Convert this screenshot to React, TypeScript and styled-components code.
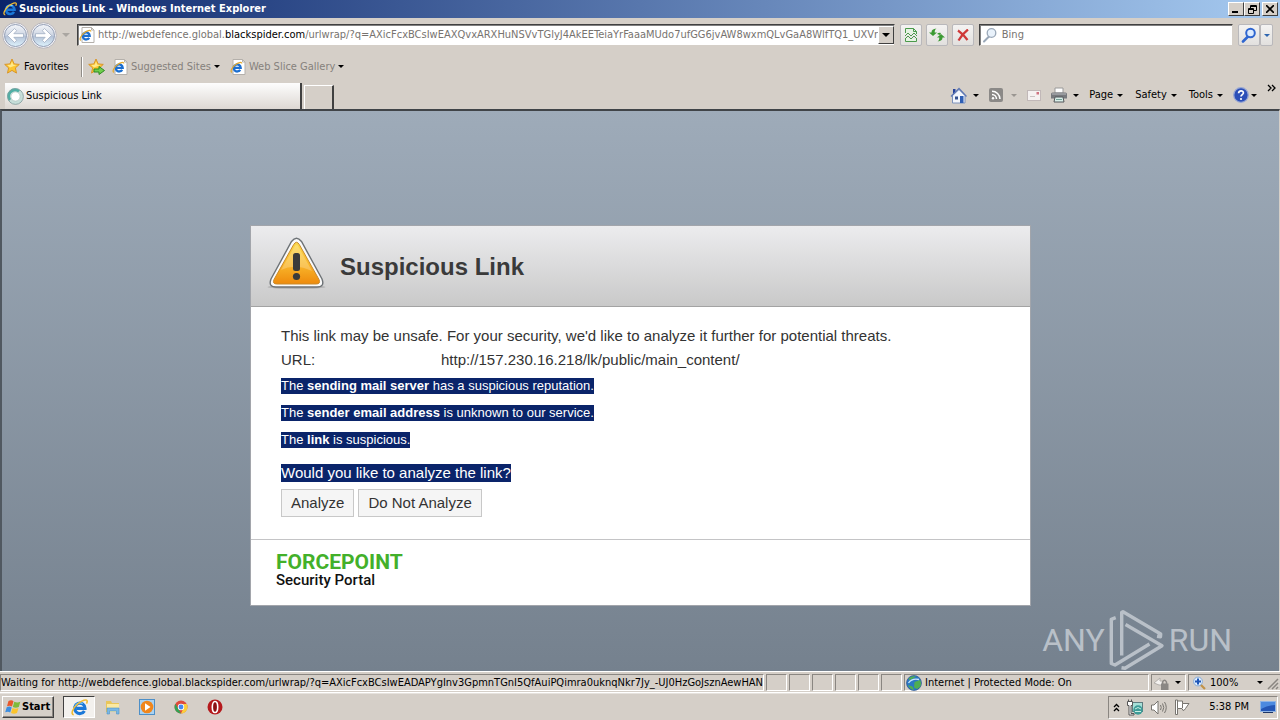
import React from "react";
import styled, { createGlobalStyle } from "styled-components";

const GlobalStyle = createGlobalStyle`
  *, *::before, *::after { box-sizing: border-box; }
  body { margin: 0; background: #d5cfc8; }
  button, input { font: inherit; color: inherit; }
  button { padding: 0; margin: 0; border: 0; background: none; }
  svg { display: block; flex: none; }
`;

const face = "#d5cfc8";
const uiFont = `Tahoma, "DejaVu Sans Condensed", "DejaVu Sans", sans-serif`;

/* ---------- window frame ---------- */

const Window = styled.div`
  display: flex;
  flex-direction: column;
  min-height: 100vh;
  background: ${face};
  color: #000;
  font-family: ${uiFont};
  font-size: 11px;
  line-height: 14px;
  white-space: nowrap;
`;

const TitleBar = styled.header`
  display: flex;
  align-items: center;
  gap: 2px;
  height: 18px;
  padding: 0 2px 0 3px;
  background: linear-gradient(90deg, #0a246a, #a6caf0);
  color: #fff;
`;

const WindowTitle = styled.h1`
  flex: 1;
  margin: 0;
  font-size: 11px;
  font-weight: bold;
`;

const CaptionButtons = styled.div`
  display: flex;
`;

const CaptionButton = styled.button<{ $apart?: boolean }>`
  display: grid;
  place-items: center;
  width: 16px;
  height: 14px;
  margin-left: ${(p) => (p.$apart ? "2px" : "0")};
  background: ${face};
  border: 1px solid;
  border-color: #fff #404040 #404040 #fff;
`;

/* ---------- navigation row ---------- */

const NavRow = styled.div`
  display: flex;
  align-items: center;
  gap: 5px;
  height: 34px;
  padding: 0 7px 0 2px;
`;

const TravelButtons = styled.div`
  display: flex;
  align-items: center;
  gap: 1px;
  width: 70px;
`;

const PlainButton = styled.button<{ $muted?: boolean; $gap?: number }>`
  display: flex;
  align-items: center;
  gap: ${(p) => p.$gap ?? 4}px;
  color: ${(p) => (p.$muted ? "#85817c" : "#000")};
`;

const Field = styled.div`
  display: flex;
  align-items: center;
  height: 22px;
  background: #fff;
  border: 1px solid;
  border-color: #404040 #d5cfc8 #d5cfc8 #404040;
  box-shadow: inset 1px 1px 0 #808080;
  color: #77736f;
`;

const AddressField = styled(Field)`
  flex: 1;
  min-width: 0;
  gap: 3px;
  padding-left: 1px;
`;

const AddressText = styled.div`
  flex: 1;
  min-width: 0;
  overflow: hidden;
  outline: 0;
`;

const Domain = styled.span`
  color: #000;
`;

const ComboButton = styled.button`
  display: grid;
  place-items: center;
  width: 16px;
  height: 18px;
  margin-left: -3px;
  background: ${face};
  border: 1px solid;
  border-color: #fff #404040 #404040 #fff;
`;

const ToolButton = styled.button<{ $narrow?: boolean }>`
  display: grid;
  place-items: center;
  width: ${(p) => (p.$narrow ? 13 : 22)}px;
  height: 22px;
  background: linear-gradient(#f4f3f2, #e2e0de);
  border: 1px solid #b9b8bb;
  border-radius: 2px;
`;

const ButtonGroup = styled.div<{ $gap?: number }>`
  display: flex;
  gap: ${(p) => p.$gap ?? 0}px;
`;

const SearchField = styled(Field)`
  width: 20%;
  gap: 4px;
  padding-left: 2px;
`;

const SearchInput = styled.input`
  flex: 1;
  min-width: 0;
  padding: 0;
  border: 0;
  outline: 0;
  background: transparent;
  &::placeholder { color: #77736f; opacity: 1; }
`;

/* ---------- favorites and tabs ---------- */

const FavoritesRow = styled.nav`
  display: flex;
  align-items: center;
  height: 29px;
  padding-left: 4px;
  gap: 5px;
`;

const FavoritesButton = styled(PlainButton)`
  width: 72px;
`;

const Divider = styled.span`
  width: 2px;
  height: 20px;
  border-left: 1px solid #908c87;
  border-right: 1px solid #fff;
`;

const LinkButton = styled(PlainButton)`
  margin: 0 3px 0 2px;
`;

const TabRow = styled.div`
  display: flex;
  align-items: flex-end;
  height: 28px;
  padding-left: 5px;
  gap: 2px;
`;

const Tab = styled.button`
  display: flex;
  align-items: center;
  gap: 2px;
  width: 297px;
  height: 26px;
  padding-left: 2px;
  background: linear-gradient(#fdfdfd, #ddd8d3);
  border-right: 2px solid #404040;
`;

const NewTab = styled.button`
  width: 30px;
  height: 24px;
  border: solid;
  border-width: 1px 2px 0 1px;
  border-color: #fff #404040 #fff #fff;
`;

const CommandBar = styled.div`
  display: flex;
  align-items: center;
  justify-content: flex-end;
  flex: 1;
  height: 28px;
  padding-right: 4px;
  gap: 10px;
`;

const Chevrons = styled.button`
  align-self: flex-start;
  line-height: 14px;
`;

/* ---------- page ---------- */

const Viewport = styled.main`
  flex: 1;
  display: flex;
  flex-direction: column;
  align-items: center;
  position: relative;
  padding: 114px 16px 60px;
  border-top: 2px solid #404448;
  border-left: 2px solid #505860;
  border-right: 1px solid ${face};
  background: linear-gradient(#9eabb9, #75818e);
  font-family: Arial, "Liberation Sans", sans-serif;
  font-size: 15px;
  line-height: 24px;
  color: #333;
  white-space: normal;
`;

const Card = styled.section`
  width: 100%;
  max-width: 781px;
  background: #fff;
  border: 1px solid #a2a5ab;
`;

const CardHeader = styled.header`
  display: flex;
  align-items: center;
  gap: 14px;
  height: 81px;
  padding: 0 0 4px 16px;
  background: linear-gradient(#ececee, #c9c9c9);
  border-bottom: 1px solid #a3a3a3;
`;

const Heading = styled.h2`
  margin: 0;
  padding-top: 6px;
  font-size: 24px;
  line-height: 30px;
  color: #3a3a3a;
`;

const CardBody = styled.div`
  padding: 17px 30px 22px;
`;

const Line = styled.p`
  margin: 0;
`;

const Facts = styled.dl`
  display: grid;
  grid-template-columns: 160px 1fr;
  margin: 0;
  dd { margin: 0; }
`;

const Reasons = styled.ul`
  margin: 0 0 8px;
  padding: 0;
  list-style: none;
  font-size: 13px;
  line-height: 27px;
`;

const Selected = styled.span`
  padding-bottom: 1px;
  background: #0a246a;
  color: #fff;
`;

const Actions = styled.div`
  display: flex;
  gap: 4px;
  margin-top: 4px;
`;

const ActionButton = styled.button`
  height: 28px;
  padding: 0 9px;
  background: #f5f5f5;
  border: 1px solid #c8c8c8;
`;

const CardFooter = styled.footer`
  height: 66px;
  padding: 11px 25px;
  border-top: 1px solid #c4c4c6;
  font-family: Roboto, sans-serif;
`;

const Brand = styled.div`
  font-size: 21px;
  line-height: 22px;
  font-weight: 700;
  color: #43b02a;
`;

const Product = styled.div`
  font-size: 15px;
  line-height: 15px;
  font-weight: 500;
  color: #111;
`;

const Watermark = styled.div`
  position: absolute;
  right: 47px;
  bottom: 0;
  display: flex;
  align-items: center;
  gap: 4px;
  font-family: Roboto, sans-serif;
  font-size: 32px;
  line-height: 60px;
  color: #b9c0c8;
`;

/* ---------- status bar and taskbar ---------- */

const StatusBar = styled.footer`
  display: flex;
  gap: 2px;
  height: 22px;
  padding: 2px 0 1px;
  border-top: 1px solid #fff;
  border-bottom: 1px solid #fff;
`;

const StatusCell = styled.div<{ $width?: number }>`
  display: flex;
  align-items: center;
  gap: 4px;
  flex: none;
  width: ${(p) => (p.$width ? `${p.$width}px` : "auto")};
  padding: 0 1px;
  border: 1px solid;
  border-color: #8a8681 #fff #fff #8a8681;
`;

const MessageCell = styled(StatusCell)`
  flex: 1 0 auto;
  padding: 0;
`;

const ZoneCell = styled(StatusCell)`
  flex: 0 1 250px;
  gap: 3px;
`;

const ZoomCell = styled(StatusCell)`
  padding-left: 4px;
  border-right: 0;
`;

const ZoomValue = styled.span`
  flex: 1;
`;

const TaskBar = styled.div`
  display: flex;
  align-items: center;
  height: 27px;
  padding: 0 2px;
  border-top: 1px solid #e6e2dd;
`;

const StartButton = styled.button`
  display: flex;
  align-items: center;
  gap: 1px;
  width: 52px;
  height: 22px;
  padding-left: 2px;
  margin-right: 9px;
  font-weight: bold;
  border: 1px solid;
  border-color: #fff #404040 #404040 #fff;
  box-shadow: inset -1px -1px 0 #8a8681;
`;

const TaskButton = styled.button<{ $active?: boolean }>`
  display: grid;
  place-items: center;
  width: 32px;
  height: 22px;
  margin-right: 2px;
  background: ${(p) => (p.$active ? "#f3f1ee" : "transparent")};
  border: ${(p) => (p.$active ? "1px solid" : "0")};
  border-color: #404040 #fff #fff #404040;
`;

const Tray = styled.div`
  display: flex;
  align-items: center;
  gap: 7px;
  height: 23px;
  margin-left: auto;
  padding: 0 1px 0 4px;
  border: 1px solid;
  border-color: #8a8681 #fff #fff #8a8681;
`;

const Clock = styled.time`
  margin: 0 4px 0 11px;
`;

/* ---------- icons ---------- */

const Caret = ({ color = "#000", size = 6 }: { color?: string; size?: number }) => (
  <svg width={size} height={size / 2} viewBox="0 0 6 3" fill={color} aria-hidden="true">
    <path d="M0 0h6L3 3z" />
  </svg>
);

const IeGlyph = ({ size = 16 }: { size?: number }) => (
  <svg width={size} height={size} viewBox="0 0 16 16" fill="none" aria-hidden="true">
    <path d="M12.600 11.200A4.900 4.900 0 1 1 13.200 8.800H5" stroke="#1b78d8" strokeWidth="2.900" />
    <path d="M3.600 7.500A5 5 0 0 1 11 4.300" stroke="#7fd0fb" strokeWidth="1.200" />
    <path d="M2.600 14.800C-.6 14.400 1.600 8.600 6.300 4.700 10.400 1.300 14.700-.1 15.200 1.800c.1.800-.1 1.600-.6 2.500" stroke="#f0bb33" strokeWidth="1.500" />
  </svg>
);

const IePage = () => (
  <svg width="16" height="16" viewBox="0 0 16 16" fill="none" aria-hidden="true">
    <path d="M3 .5h9.500l2.500 2.500v12.500H3z" fill="#fff" stroke="#b4b0ab" />
    <path d="M12.500.5v2.500H15" stroke="#b4b0ab" />
    <path d="M10.200 10.800A3.500 3.500 0 1 1 10.700 8.800H4.500" stroke="#1c6fd0" strokeWidth="2.300" />
    <path d="M1.900 13.300C-.2 12.800 2 8.300 5.300 5.800c2.900-2.300 6.300-3.200 6.500-1.300" stroke="#e3a92e" strokeWidth="1.200" />
  </svg>
);

const Travel = ({ flip }: { flip?: boolean }) => (
  <svg width="27" height="27" viewBox="0 0 27 27" fill="none" aria-hidden="true">
    <defs>
      <linearGradient id={flip ? "orbF" : "orbB"} x1="0" y1="0" x2="0" y2="1">
        <stop offset="0" stopColor="#f4f6fa" />
        <stop offset=".48" stopColor="#ced6e3" />
        <stop offset=".52" stopColor="#b4c1d6" />
        <stop offset="1" stopColor="#def3fd" />
      </linearGradient>
    </defs>
    <circle cx="13.500" cy="13.500" r="12.800" fill="#f6f6f8" stroke="#b6b4bb" />
    <circle cx="13.500" cy="13.500" r="11" fill={`url(#${flip ? "orbF" : "orbB"})`} stroke="#929db4" />
    <g transform={flip ? "rotate(180 13.500 13.500)" : undefined}>
      <path d="M5.500 13.500l7-7 2.200 2.200-2.900 3H21.500v3.600h-9.700l2.900 3-2.200 2.200z" fill="#fff" stroke="#9aa7bd" strokeWidth=".7" />
    </g>
  </svg>
);

const Star = ({ arrow }: { arrow?: boolean }) => (
  <svg width="17" height="17" viewBox="0 0 17 17" aria-hidden="true">
    <path d="M8 1l2.100 4.900 5.200.5-3.900 3.500 1.100 5.200L8 12.400l-4.500 2.700 1.100-5.200L.7 6.400l5.200-.5z" fill="#fdc630" stroke="#d9962a" strokeLinejoin="round" />
    <path d="M8 3.500l1.300 3.200 3.400.4L6 9.500 3.300 7.100l3.400-.4z" fill="#ffe98a" />
    {arrow && <path d="M6 11h5V8.500l5.500 4-5.500 4V14H6z" fill="#6fce4c" stroke="#2e8a22" />}
  </svg>
);

const Spinner = () => (
  <svg width="17" height="17" viewBox="0 0 17 17" fill="none" aria-hidden="true">
    <circle cx="8.500" cy="8.500" r="6.300" stroke="#c6ded9" strokeWidth="3" />
    <path d="M3 12A6.300 6.300 0 0 1 12 3.300" stroke="#4fb0a6" strokeWidth="3" />
    <circle cx="8.500" cy="8.500" r="7.900" stroke="#7f9a9a" strokeWidth=".8" />
    <circle cx="8.500" cy="8.500" r="4.600" fill="#fff" stroke="#9dbab6" strokeWidth=".6" />
  </svg>
);

const Magnifier = ({ color, pale }: { color: string; pale?: boolean }) => (
  <svg width="16" height="16" viewBox="0 0 16 16" fill="none" aria-hidden="true">
    <path d="M7 9.500L2 14.500" stroke={color} strokeWidth={pale ? 2 : 2.600} strokeLinecap="round" />
    <circle cx="9.500" cy="6" r="4.300" fill={pale ? "#e9f2fb" : "#dcebff"} stroke={color} strokeWidth={pale ? 1.300 : 2} />
  </svg>
);

const CompatPage = () => (
  <svg width="14" height="16" viewBox="0 0 14 16" fill="none" stroke="#4b9a4b" aria-hidden="true">
    <path d="M1.500 6V1.500h8l3 3V7M1.500 11v3.500h11V12" fill="#e6f3e3" />
    <path d="M9.500 1.500v3h3" />
    <path d="M1 9l3-3 3 3 3-3 3 3M1 12l3-3 3 3 3-3 3 3" />
  </svg>
);

const Refresh = () => (
  <svg width="16" height="14" viewBox="0 0 16 14" aria-hidden="true" fill="#3c9a33">
    <path d="M4 8L0 4.500h2.500C2.500 2 4 .8 7.500.5 6 1.500 5.700 2.500 5.700 4.500H8z" />
    <path d="M12 6l4 3.500h-2.500c0 2.500-1.500 3.700-5 4 1.500-1 1.800-2 1.800-4H8z" />
    <path d="M8 6q2-2 4-1l-1 2z" />
  </svg>
);

const Stop = () => (
  <svg width="12" height="12" viewBox="0 0 12 12" fill="none" stroke="#cf3838" strokeWidth="2.200" aria-hidden="true">
    <path d="M1 1.500q5 3.500 9.500 9.500M11 .5Q5 5 1.500 11.500" />
  </svg>
);

const Home = () => (
  <svg width="17" height="17" viewBox="0 0 17 17" aria-hidden="true">
    <path d="M3 2h2.500v5H3z" fill="#27439b" />
    <path d="M2.500 8.500L9 2.500l6 6v7.500h-12.500z" fill="#f3f6fc" stroke="#7d93bd" />
    <path d="M1 9.500L9 1.500l7.500 8" fill="none" stroke="#5f78b4" strokeWidth="1.300" />
    <path d="M10 9h3.500v7H10z" fill="#2f5fb5" />
    <path d="M5 9.500h3v3H5z" fill="#33518f" />
  </svg>
);

const Feed = () => (
  <svg width="14" height="14" viewBox="0 0 14 14" fill="none" aria-hidden="true">
    <rect width="14" height="14" rx="2" fill="#8b8987" />
    <path d="M3 3.200A8 8 0 0 1 11 11M3 6.500A4.600 4.600 0 0 1 7.500 11" stroke="#fff" strokeWidth="1.500" />
    <circle cx="4" cy="10.200" r="1.200" fill="#fff" />
  </svg>
);

const Mail = () => (
  <svg width="14" height="11" viewBox="0 0 14 11" aria-hidden="true">
    <rect x=".5" y=".5" width="13" height="10" fill="#f5f1f1" stroke="#c1b8b8" />
    <rect x="9.500" y="2" width="2.500" height="2.500" fill="#cf7280" />
    <path d="M3 6.500h5" stroke="#c8c2c2" />
  </svg>
);

const Printer = () => (
  <svg width="16" height="16" viewBox="0 0 16 16" aria-hidden="true">
    <path d="M4 1h8v5H4z" fill="#fff" stroke="#999" />
    <path d="M0 7q0-1.500 1.500-1.500h13Q16 5.500 16 7v4.500H0z" fill="#77797d" />
    <path d="M1 7h14" stroke="#b9bbbf" />
    <path d="M4 10h8l1 5H3z" fill="#d9efe9" stroke="#55585c" />
    <path d="M5 12.500h6" stroke="#77a49a" />
  </svg>
);

const Help = () => (
  <svg width="16" height="16" viewBox="0 0 16 16" fill="none" aria-hidden="true">
    <circle cx="8" cy="8" r="7.300" fill="#2c4fb8" stroke="#98a7d4" strokeWidth="1.300" />
    <path d="M5.600 6.200c0-3.200 5-3 4.800-.2C10.300 7.600 8 7.700 8 9.600" stroke="#fff" strokeWidth="1.700" />
    <circle cx="8" cy="12" r="1.100" fill="#fff" />
  </svg>
);

const Warning = () => (
  <svg width="59" height="54" viewBox="0 0 59 54" aria-hidden="true">
    <defs>
      <linearGradient id="warn" x1="0" y1="0" x2="0" y2="1">
        <stop offset="0" stopColor="#fbd94c" />
        <stop offset=".55" stopColor="#f9b52a" />
        <stop offset="1" stopColor="#ee8a0c" />
      </linearGradient>
    </defs>
    <ellipse cx="29.500" cy="50" rx="29" ry="2" fill="#8b8b8b" opacity=".45" />
    <path d="M24.500 4.500Q29.500-2 34.500 4.500L55 42q3 8-5 8H9q-8 0-5-8z" fill="#fafafa" stroke="#6d7276" strokeWidth="1.400" />
    <path d="M26.700 7.500Q29.500 3 32.300 7.500L52 42.500q2 4.500-3 4.500H10q-5 0-3-4.500z" fill="url(#warn)" stroke="#c98a2c" />
    <path d="M28 9q1.500-2 3 0l14 25Q28 26 14 33z" fill="#fff" opacity=".22" />
    <rect x="26" y="16" width="7" height="18" rx="2.500" fill="#3b3b3b" />
    <circle cx="29.500" cy="39.500" r="3.600" fill="#3b3b3b" />
  </svg>
);

const PlayLogo = () => (
  <svg width="56" height="62" viewBox="0 0 56 62" fill="none" stroke="#b9c0c8" strokeWidth="3.400" strokeLinejoin="round" aria-hidden="true">
    <path d="M6.700 8.700L2.300 10.300V54.500L6 56 40.500 35" />
    <path d="M12.700 46.500V3.500L14 2.700 51.700 25 51.500 27.700 48 27.200" />
    <path d="M16.500 15.500L53 36.700 16 59.300 12.500 58.700" />
  </svg>
);

const Globe = () => (
  <svg width="16" height="16" viewBox="0 0 16 16" aria-hidden="true">
    <circle cx="8" cy="8" r="7.500" fill="#2b78c4" stroke="#254a86" strokeWidth=".6" />
    <path d="M2.500 3.500Q5.500.5 10 1.500L7 3.500 3.500 5zM8.500 7l5.500-2q2 3.500 0 7L11 14 8 12.500zM2 10l4.500 1.500L8 15Q4 14.500 2 10z" fill="#4fae52" />
    <path d="M2.500 8Q6 3 13 4.500" stroke="#c9e8fb" strokeWidth="1.300" fill="none" />
  </svg>
);

const LockShield = () => (
  <svg width="18" height="16" viewBox="0 0 18 16" fill="none" aria-hidden="true">
    <path d="M1 8l6-5v3h3v4H6z" fill="#f4f2f0" stroke="#b3afab" />
    <path d="M9.500 9V7q2-3.500 4 0v2" stroke="#8a8784" strokeWidth="1.500" />
    <path d="M8 8.500h7.500V15H8z" fill="#8a8784" />
  </svg>
);

const ZoomPlus = () => (
  <svg width="13" height="14" viewBox="0 0 13 14" fill="none" aria-hidden="true">
    <path d="M7.500 8.500l4.500 4.500" stroke="#c29348" strokeWidth="2.200" />
    <circle cx="5" cy="5.500" r="4.400" fill="#e0efff" stroke="#86abd8" />
    <path d="M5 2.500v6M2 5.500h6" stroke="#1f57b8" strokeWidth="2" />
  </svg>
);

const Grip = () => (
  <svg width="12" height="14" viewBox="0 0 12 14" stroke="#8a8681" aria-hidden="true">
    <path d="M1 13L11 3M5 13l6-6M9 13l2-2" strokeWidth="1.500" />
  </svg>
);

const WindowsFlag = () => (
  <svg width="16" height="16" viewBox="0 0 16 16" aria-hidden="true">
    <path d="M3.500 2q3-1.500 5 .3L7 7.500q-2-1.500-5-.3z" fill="#e8582b" />
    <path d="M9.300 2.800q3 1.500 6 0L13.800 8q-3 1.500-6 0z" fill="#7fba3a" />
    <path d="M1.700 8.200q3-1.300 5 .2L5.200 13.500q-2-1.500-5-.2z" fill="#3d8ee0" />
    <path d="M7.500 8.900q3 1.500 6 0L12 14.100q-3 1.500-6 0z" fill="#fbc42c" />
  </svg>
);

const Folder = () => (
  <svg width="16" height="16" viewBox="0 0 16 16" aria-hidden="true">
    <path d="M1 2h5l1 2h7v9H1z" fill="#e9c65b" />
    <path d="M2 5h12v8H2z" fill="#fbe9a2" />
    <path d="M2 9h12v6h-2.500v-3h-7v3H2z" fill="#79b7e6" stroke="#4f93c8" strokeWidth=".6" />
  </svg>
);

const MediaPlayer = () => (
  <svg width="16" height="16" viewBox="0 0 16 16" aria-hidden="true">
    <rect x=".5" y=".5" width="15" height="15" fill="#a9d2f2" stroke="#4d8fc7" />
    <circle cx="8" cy="8" r="6.300" fill="#f0861c" />
    <path d="M6 4.200L11.500 8 6 11.800z" fill="#fff" />
  </svg>
);

const Chrome = () => (
  <svg width="14" height="14" viewBox="0 0 14 14" aria-hidden="true">
    <circle cx="7" cy="7" r="6.500" fill="#de4b3c" />
    <path d="M1.400 3.800L7 13.500A6.500 6.500 0 0 1 1.400 3.800z" fill="#32a255" />
    <path d="M7 13.500L10 7 9 4h3.800A6.500 6.500 0 0 1 7 13.500z" fill="#fbcf3b" />
    <circle cx="7" cy="7" r="3.200" fill="#fff" />
    <circle cx="7" cy="7" r="2.400" fill="#4688f1" />
  </svg>
);

const Opera = () => (
  <svg width="16" height="16" viewBox="0 0 16 16" aria-hidden="true">
    <circle cx="8" cy="8" r="7.500" fill="#b5191c" />
    <ellipse cx="8" cy="8" rx="2.700" ry="5.500" fill="#8c1013" stroke="#fff" strokeWidth="1.600" />
  </svg>
);

const Network = () => (
  <svg width="17" height="17" viewBox="0 0 17 17" fill="none" aria-hidden="true">
    <rect x="5.500" y="3.500" width="10" height="9" fill="#a7e0d8" stroke="#5d7c80" />
    <circle cx="11" cy="11" r="4.700" fill="#3f9c98" />
    <path d="M8 10q3-3 6 0M8 12.500h6" stroke="#c9efe4" />
    <path d="M.5 2.500h5v4h-1.500v8h3v1.500H2V6.500H.5zM1.500.5v2M4.500.5v2" fill="#fff" stroke="#555" />
  </svg>
);

const Speaker = () => (
  <svg width="16" height="15" viewBox="0 0 16 15" fill="none" stroke="#77746f" aria-hidden="true">
    <path d="M.5 5H3l4-4v13l-4-4H.5z" fill="#fff" />
    <path d="M9.500 5q1.500 2.500 0 5M11.500 3.500q2.500 4 0 8M13.500 2q3.500 5.500 0 11" />
  </svg>
);

const ActionFlag = () => (
  <svg width="17" height="16" viewBox="0 0 17 16" fill="none" stroke="#77746f" aria-hidden="true">
    <path d="M1.500 1v14.500h2V9.500H8l1 2q1.500 0 2.500-2l3.500-5H8.500V2h-5V1z" fill="#fff" />
    <path d="M3.500 2v7.500M8.500 4.500V9" />
  </svg>
);

const Desktop = () => (
  <svg width="16" height="12" viewBox="0 0 16 12" aria-hidden="true">
    <rect x=".5" y=".5" width="15" height="10" fill="#2456b5" stroke="#8fb4e4" />
    <path d="M1 1h14v3Q8 4 1 8z" fill="#4c8ae0" />
    <path d="M3 11.500h10" stroke="#1d3566" />
  </svg>
);

const DoubleChevron = () => (
  <svg width="7" height="9" viewBox="0 0 7 9" fill="none" stroke="#000" strokeWidth="1.300" aria-hidden="true">
    <path d="M1 4l2.500-2.500L6 4M1 8l2.500-2.500L6 8" />
  </svg>
);

const emptyCells = [0, 1, 2, 3, 4, 5];

export default function App() {
  return (
    <Window>
      <GlobalStyle />
      <TitleBar>
        <IeGlyph size={14} />
        <WindowTitle>Suspicious Link - Windows Internet Explorer</WindowTitle>
        <CaptionButtons>
          <CaptionButton aria-label="Minimize">
            <svg width="8" height="8"><path d="M0 6h6v2H0z" /></svg>
          </CaptionButton>
          <CaptionButton aria-label="Restore">
            <svg width="9" height="9" fill="none" stroke="#000">
              <path d="M2.500 3V.5h6v5H6M3 1.500h5M.5 3.500h5v5h-5zM1 4.500h4" />
            </svg>
          </CaptionButton>
          <CaptionButton $apart aria-label="Close">
            <svg width="8" height="8" stroke="#000" strokeWidth="1.600"><path d="M0 0l8 8M8 0L0 8" /></svg>
          </CaptionButton>
        </CaptionButtons>
      </TitleBar>

      <NavRow>
        <TravelButtons>
          <PlainButton aria-label="Back"><Travel /></PlainButton>
          <PlainButton aria-label="Forward" $gap={5}>
            <Travel flip />
            <Caret color="#aaa6a1" size={8} />
          </PlainButton>
        </TravelButtons>
        <AddressField>
          <IePage />
          <AddressText role="textbox" aria-label="Address" contentEditable suppressContentEditableWarning spellCheck={false}>
            http://webdefence.global.<Domain>blackspider.com</Domain>
            /urlwrap/?q=AXicFcxBCsIwEAXQvxARXHuNSVvTGlyJ4AkEETeiaYrFaaaMUdo7ufGG6jvAW8wxmQLvGaA8WlfTQ1_UXVr2E
          </AddressText>
          <ComboButton aria-label="Show addresses"><Caret size={8} /></ComboButton>
        </AddressField>
        <ButtonGroup $gap={4}>
          <ToolButton aria-label="Compatibility view"><CompatPage /></ToolButton>
          <ToolButton aria-label="Refresh"><Refresh /></ToolButton>
          <ToolButton aria-label="Stop"><Stop /></ToolButton>
        </ButtonGroup>
        <SearchField>
          <Magnifier color="#9aa8b8" pale />
          <SearchInput type="search" aria-label="Search" placeholder="Bing" />
        </SearchField>
        <ButtonGroup>
          <ToolButton aria-label="Search"><Magnifier color="#2f66d0" /></ToolButton>
          <ToolButton aria-label="Search options" $narrow><Caret color="#2f66b0" /></ToolButton>
        </ButtonGroup>
      </NavRow>

      <FavoritesRow>
        <FavoritesButton $gap={3}><Star />Favorites</FavoritesButton>
        <Divider />
        <PlainButton aria-label="Add to favorites bar"><Star arrow /></PlainButton>
        <LinkButton $muted $gap={3}><IePage />Suggested Sites <Caret /></LinkButton>
        <LinkButton $muted $gap={3}><IePage />Web Slice Gallery <Caret /></LinkButton>
      </FavoritesRow>

      <TabRow>
        <Tab><Spinner />Suspicious Link</Tab>
        <NewTab aria-label="New tab" />
        <CommandBar>
          <PlainButton aria-label="Home" $gap={6}><Home /><Caret /></PlainButton>
          <PlainButton aria-label="Feeds" $gap={8}><Feed /><Caret color="#9a9691" /></PlainButton>
          <PlainButton aria-label="Read mail"><Mail /></PlainButton>
          <PlainButton aria-label="Print" $gap={6}><Printer /><Caret /></PlainButton>
          <ButtonGroup $gap={12}>
            <PlainButton>Page <Caret /></PlainButton>
            <PlainButton>Safety <Caret /></PlainButton>
            <PlainButton>Tools <Caret /></PlainButton>
          </ButtonGroup>
          <PlainButton aria-label="Help" $gap={2}><Help /><Caret /></PlainButton>
          <Chevrons aria-label="More commands">
            <svg width="9" height="14" fill="none" stroke="#000" strokeWidth="1.300">
              <path d="M1 4l3 3-3 3M5 4l3 3-3 3" />
            </svg>
          </Chevrons>
        </CommandBar>
      </TabRow>

      <Viewport>
        <Card>
          <CardHeader>
            <Warning />
            <Heading>Suspicious Link</Heading>
          </CardHeader>
          <CardBody>
            <Line>This link may be unsafe. For your security, we'd like to analyze it further for potential threats.</Line>
            <Facts>
              <dt>URL:</dt>
              <dd>http://157.230.16.218/lk/public/main_content/</dd>
            </Facts>
            <Reasons>
              <li><Selected>The <b>sending mail server</b> has a suspicious reputation.</Selected></li>
              <li><Selected>The <b>sender email address</b> is unknown to our service.</Selected></li>
              <li><Selected>The <b>link</b> is suspicious.</Selected></li>
            </Reasons>
            <Line><Selected>Would you like to analyze the link?</Selected></Line>
            <Actions>
              <ActionButton>Analyze</ActionButton>
              <ActionButton>Do Not Analyze</ActionButton>
            </Actions>
          </CardBody>
          <CardFooter>
            <Brand>FORCEPOINT</Brand>
            <Product>Security Portal</Product>
          </CardFooter>
        </Card>
        <Watermark>
          <span>ANY</span>
          <PlayLogo />
          <span>RUN</span>
        </Watermark>
      </Viewport>

      <StatusBar>
        <MessageCell>
          Waiting for http://webdefence.global.blackspider.com/urlwrap/?q=AXicFcxBCsIwEADAPYgInv3GpmnTGnI5QfAuiPQimra0uknqNkr7Jy_-UJ0HzGoJsznAewHAN
        </MessageCell>
        {emptyCells.map((i) => <StatusCell key={i} $width={21} />)}
        <ZoneCell><Globe />Internet | Protected Mode: On</ZoneCell>
        <StatusCell $width={35}><LockShield /><Caret /></StatusCell>
        <ZoomCell $width={92}>
          <ZoomPlus />
          <ZoomValue>100%</ZoomValue>
          <Caret />
          <Grip />
        </ZoomCell>
      </StatusBar>

      <TaskBar>
        <StartButton><WindowsFlag />Start</StartButton>
        <TaskButton $active aria-label="Internet Explorer"><IeGlyph size={17} /></TaskButton>
        <TaskButton aria-label="File Explorer"><Folder /></TaskButton>
        <TaskButton aria-label="Media Player"><MediaPlayer /></TaskButton>
        <TaskButton aria-label="Chrome"><Chrome /></TaskButton>
        <TaskButton aria-label="Opera"><Opera /></TaskButton>
        <Tray>
          <DoubleChevron />
          <Network />
          <Speaker />
          <ActionFlag />
          <Clock>5:38 PM</Clock>
          <Desktop />
        </Tray>
      </TaskBar>
    </Window>
  );
}
